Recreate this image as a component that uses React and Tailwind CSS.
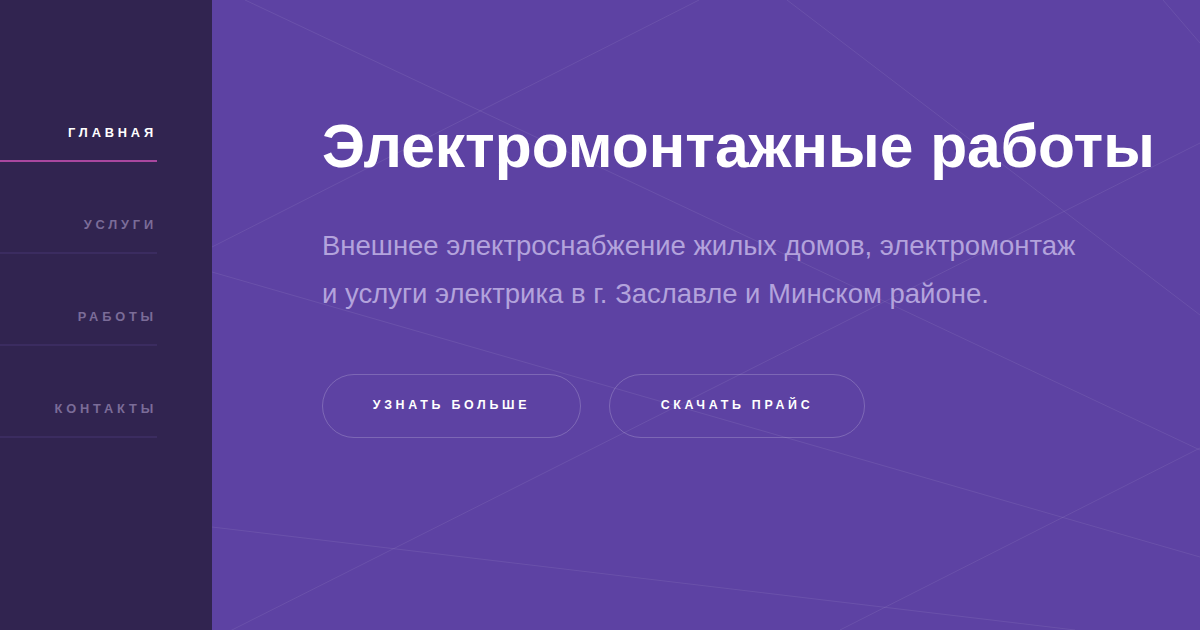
import React from 'react';

const NAV = [
  { label: 'Главная', active: true },
  { label: 'Услуги' },
  { label: 'Работы' },
  { label: 'Контакты' },
];

// faint lines across the hero (coords inside the 988x630 panel)
const LINES = [
  [33, 0, 988, 450],
  [0, 247, 487, 0],
  [0, 272, 988, 557],
  [575, 0, 988, 315],
  [8, 636, 988, 143],
  [628, 630, 988, 448],
  [951, 0, 988, 43],
  [0, 527, 863, 630],
];

const Sidebar = () => (
  <aside className="w-[212px] shrink-0 bg-[#312450] pt-[70px]">
    <nav className="w-[157px]">
      {NAV.map((item) => (
        <a
          key={item.label}
          href="#"
          className={`block text-right pt-[55px] pb-[19px] leading-[16px] text-[12.8px] font-bold uppercase tracking-[0.3em] border-b-2 ${
            item.active ? 'text-white border-[#a9479f]' : 'text-[#7b6c98] border-[#3b2c60]'
          }`}
        >
          {item.label}
        </a>
      ))}
    </nav>
  </aside>
);

const Hero = () => (
  <main className="relative flex-1 overflow-hidden bg-[#5d42a3]">
    <svg className="absolute inset-0 w-full h-full" viewBox="0 0 988 630" preserveAspectRatio="none">
      {LINES.map(([x1, y1, x2, y2], i) => (
        <line key={i} x1={x1} y1={y1} x2={x2} y2={y2} stroke="rgba(255,255,255,0.08)" strokeWidth="1" />
      ))}
    </svg>

    <div className="relative pl-[110px] pt-[116px]">
      <h1 className="text-[60.5px] leading-none font-bold text-white whitespace-nowrap">
        Электромонтажные работы
      </h1>
      <p className="mt-[45px] text-[27.5px] leading-[48px] text-[#b3a3dc] whitespace-nowrap">
        Внешнее электроснабжение жилых домов, электромонтаж
        <br />
        и услуги электрика в г. Заславле и Минском районе.
      </p>
      <div className="mt-[56px] flex gap-[28px]">
        <button className="h-[64px] w-[259px] rounded-full border border-white/20 text-white text-[12.4px] font-bold uppercase tracking-[0.3em]">
          Узнать больше
        </button>
        <button className="h-[64px] w-[256px] rounded-full border border-white/20 text-white text-[12.4px] font-bold uppercase tracking-[0.3em]">
          Скачать прайс
        </button>
      </div>
    </div>
  </main>
);

export default function App() {
  return (
    <div className="flex h-[630px] w-[1200px] font-['Liberation_Sans',Arial,sans-serif]">
      <Sidebar />
      <Hero />
    </div>
  );
}
